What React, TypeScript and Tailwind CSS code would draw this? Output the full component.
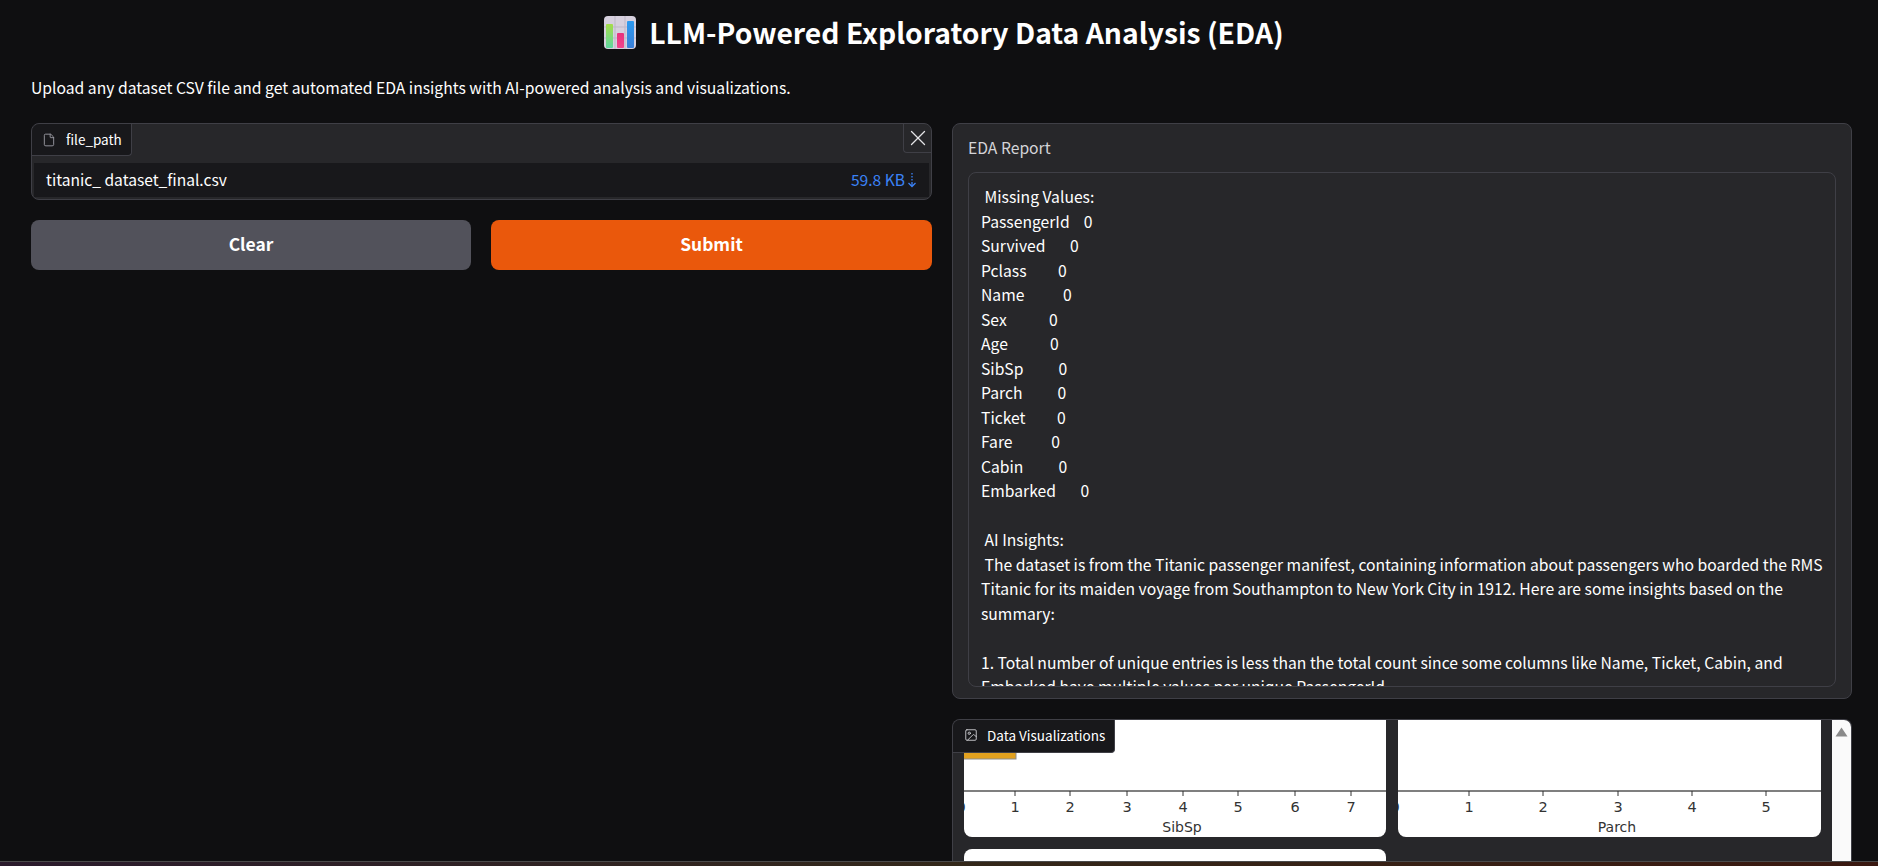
import { File, Image, X } from "lucide-react";

const reportText = ` Missing Values:
PassengerId    0
Survived       0
Pclass         0
Name           0
Sex            0
Age            0
SibSp          0
Parch          0
Ticket         0
Fare           0
Cabin          0
Embarked       0

 AI Insights:
 The dataset is from the Titanic passenger manifest, containing information about passengers who boarded the RMS Titanic for its maiden voyage from Southampton to New York City in 1912. Here are some insights based on the summary:

1. Total number of unique entries is less than the total count since some columns like Name, Ticket, Cabin, and Embarked have multiple values per unique PassengerId.`;

// petit emoji "bar chart"
function ChartEmoji() {
  return (
    <svg width="32" height="33" viewBox="0 0 32 33">
      <defs>
        <linearGradient id="greenBar" x1="0" x2="0" y1="0" y2="1">
          <stop offset="0" stopColor="#a5dc4a" />
          <stop offset="1" stopColor="#5fd6a0" />
        </linearGradient>
        <linearGradient id="pinkBar" x1="0" x2="0" y1="0" y2="1">
          <stop offset="0" stopColor="#e8307c" />
          <stop offset="1" stopColor="#f0468c" />
        </linearGradient>
        <linearGradient id="blueBar" x1="0" x2="0" y1="0" y2="1">
          <stop offset="0" stopColor="#2b9af0" />
          <stop offset="1" stopColor="#3a7fd8" />
        </linearGradient>
      </defs>
      <rect width="32" height="33" rx="4" fill="#d6d0de" />
      <path d="M0 11H32M0 22H32M11 0V33M21 0V33" stroke="#bdb7c8" strokeWidth="1" />
      <rect x="2" y="8" width="7" height="24" rx="1" fill="url(#greenBar)" />
      <rect x="13" y="17" width="7" height="15" rx="1" fill="url(#pinkBar)" />
      <rect x="23" y="5" width="7" height="27" rx="1" fill="url(#blueBar)" />
    </svg>
  );
}

type PlotProps = {
  label: string;
  labelX: number;
  ticks: { value: string; x: number }[];
  bar?: boolean;
};

// histogramme coupé par le scroll de la galerie
function Plot({ label, labelX, ticks, bar }: PlotProps) {
  return (
    <div className="h-[117px] overflow-hidden rounded-b-[8px] bg-white">
      <svg width="100%" height="117" className="block">
        {bar && <rect x="-2" y="20" width="54" height="19" fill="#e2a11f" stroke="#8c8c8c" />}
        <line x1="0" x2="430" y1="71" y2="71" stroke="#555555" strokeWidth="1.5" />
        {ticks.map((t) => (
          <g key={t.value}>
            <line x1={t.x} x2={t.x} y1="71" y2="76" stroke="#333333" />
            <text x={t.x} y="92" textAnchor="middle" fontSize="14.5" fill="#333333" fontFamily="'DejaVu Sans', sans-serif">
              {t.value}
            </text>
          </g>
        ))}
        <text x={labelX} y="112" textAnchor="middle" fontSize="14" fill="#333333" fontFamily="'DejaVu Sans', sans-serif">
          {label}
        </text>
      </svg>
    </div>
  );
}

const sibSpTicks = [
  { value: "0", x: -3 },
  { value: "1", x: 51 },
  { value: "2", x: 106 },
  { value: "3", x: 163 },
  { value: "4", x: 219 },
  { value: "5", x: 274 },
  { value: "6", x: 331 },
  { value: "7", x: 387 },
];

const parchTicks = [
  { value: "0", x: -3 },
  { value: "1", x: 71 },
  { value: "2", x: 145 },
  { value: "3", x: 220 },
  { value: "4", x: 294 },
  { value: "5", x: 368 },
];

export default function App() {
  return (
    <div className="relative h-[866px] overflow-hidden bg-[#0f0f11] font-['Noto_Sans_CJK_SC','Noto_Sans',sans-serif] text-white">
      {/* Titre */}
      <h1 className="flex h-[66px] items-center justify-center gap-[13px] pb-[1px] pl-[10px] text-[28.3px] font-semibold">
        <ChartEmoji />
        <span>LLM-Powered Exploratory Data Analysis (EDA)</span>
      </h1>
      <p className="mt-[10px] h-[24px] pl-[31px] text-[15.7px] leading-[24px]">
        Upload any dataset CSV file and get automated EDA insights with AI-powered analysis and visualizations.
      </p>

      <div className="mt-[23px] grid grid-cols-[901px_900px] gap-[20px] pl-[31px]">
        {/* Colonne gauche */}
        <div className="flex flex-col gap-[20px]">
          <div className="relative h-[77px] rounded-[8px] border border-[#3f3f46] bg-[#27272a]">
            <div className="flex h-[32px] w-[100px] items-center gap-[10px] rounded-br-[4px] rounded-tl-[8px] border-b border-r border-[#3f3f46] bg-[#18181b] pl-[10px] text-[13.5px]">
              <File size={14} strokeWidth={1.5} className="text-[#a1a1aa]" />
              <span>file_path</span>
            </div>
            <div className="absolute right-0 top-0 flex h-[29px] w-[28px] items-center justify-center rounded-bl-[4px] rounded-tr-[8px] border-b border-l border-[#3f3f46]">
              <X size={26} strokeWidth={1.2} className="text-[#e4e4e7]" />
            </div>
            <div className="mx-[2px] mt-[7px] flex h-[34px] items-center justify-between bg-[#18181b] pl-[12px] pr-[12px] text-[15.6px]">
              <span className="whitespace-pre">titanic_ dataset_final.csv</span>
              <span className="flex items-center text-[#3b82f6]">
                59.8 KB
                <svg width="10" height="16" viewBox="0 0 10 16" className="ml-[2px]" fill="none" stroke="#3b82f6" strokeWidth="1.3">
                  <path d="M5 1V2.5M5 4V5.5M5 7V8.5M5 10V14" />
                  <path d="M1.5 11L5 14.5L8.5 11" />
                </svg>
              </span>
            </div>
          </div>
          <div className="grid grid-cols-[440px_441px] gap-[20px]">
            <button className="h-[50px] rounded-[8px] bg-[#52525b] pb-[1px] text-[17.4px] font-semibold">Clear</button>
            <button className="h-[50px] rounded-[8px] bg-[#ea580c] pb-[1px] text-[17.4px] font-semibold">Submit</button>
          </div>
        </div>

        {/* Colonne droite */}
        <div className="flex flex-col gap-[20px]">
          <div className="h-[576px] rounded-[8px] border border-[#3f3f46] bg-[#27272a] px-[15px] pt-[12px]">
            <div className="h-[24px] text-[15.7px] leading-[24px] text-[#d4d4d8]">EDA Report</div>
            <div className="mt-[12px] h-[515px] overflow-hidden rounded-[8px] border border-[#3f3f46] pl-[12px] pr-[10px] pt-[12px] text-[15.7px] leading-[24.5px] whitespace-pre-wrap">
              {reportText}
            </div>
          </div>

          <div className="relative flex h-[160px] overflow-hidden rounded-t-[8px] border-x border-t border-[#3f3f46] bg-[#27272a]">
            <div className="absolute left-0 top-0 z-10 flex h-[33px] w-[162px] items-center gap-[9px] rounded-br-[4px] border-b border-r border-[#3f3f46] bg-[#18181b] pb-[2px] pl-[11px] text-[13.5px]">
              <Image size={14} strokeWidth={1.5} className="text-[#d4d4d8]" />
              <span>Data Visualizations</span>
            </div>
            <div className="grid flex-1 grid-cols-[422px_423px] content-start gap-x-[12px] gap-y-[12px] px-[11px]">
              <Plot label="SibSp" labelX={218} ticks={sibSpTicks} bar />
              <Plot label="Parch" labelX={219} ticks={parchTicks} />
              <div className="h-[117px] rounded-[8px] bg-white" />
            </div>
            <div className="flex w-[19px] justify-center bg-[#fafafa] pt-[7px]">
              <svg width="13" height="10" viewBox="0 0 13 10">
                <path d="M6.5 0.5L12.5 9.5H0.5Z" fill="#8a8a8a" />
              </svg>
            </div>
          </div>
        </div>
      </div>

      {/* bande du bas */}
      <div className="absolute inset-x-0 bottom-0 h-[5px] border-t border-[#4a4a4a] bg-gradient-to-r from-[#2a1a2c] via-[#33281a] to-[#3a1810]" />
    </div>
  );
}
